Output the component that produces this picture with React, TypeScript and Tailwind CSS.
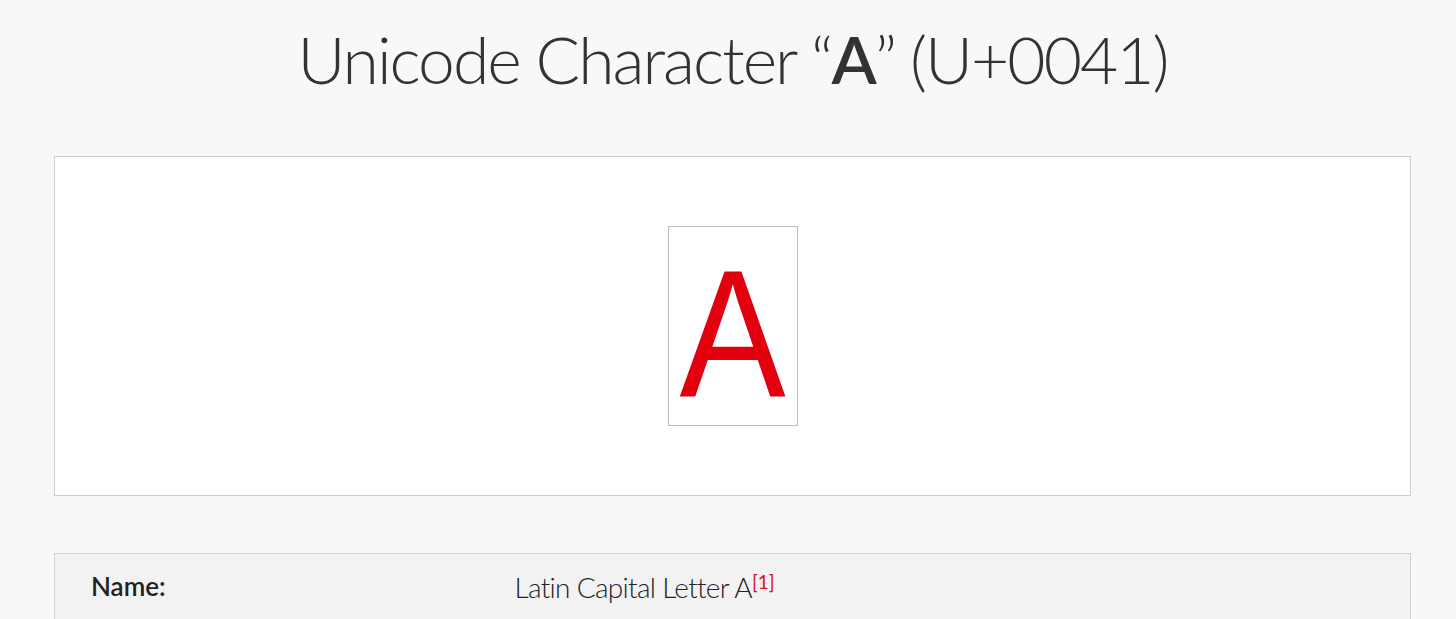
export default function App() {
  return (
    <div className="min-h-screen bg-[#f8f8f8] pl-[54px] pr-[45px] text-[#333]" style={{ fontFamily: "Lato, 'Noto Sans', sans-serif" }}>
      <h1 className="pt-[26px] text-center text-[66px] font-light leading-none tracking-[-2px] text-[#333]">
        Unicode Character “<span className="font-semibold">A</span>” (U+0041)
      </h1>

      <div className="mt-[64px] flex h-[340px] items-center justify-center border border-[#cfcfcf] bg-white">
        <div className="flex h-[200px] w-[130px] flex-col items-center border border-[#bdbdbd] pt-[16px]">
          <span className="scale-x-[0.875] text-[182px] leading-none text-[#e2000f]" style={{ fontFamily: "'Liberation Sans', Arial, sans-serif" }}>A</span>
        </div>
      </div>

      <table className="mt-[57px] w-full border border-[#d2d2d2] bg-[#f2f2f2]">
        <tbody>
          <tr>
            <td className="w-[460px] pb-10 pl-[36px] pt-[19px] align-top text-[26px] font-semibold leading-none text-[#222]">Name:</td>
            <td className="pb-10 pt-[19px] align-top text-[28px] font-light leading-none tracking-[-0.7px] text-[#222]">
              Latin Capital Letter A<sup className="text-[19px] font-normal tracking-normal text-[#e0101e]">[1]</sup>
            </td>
          </tr>
        </tbody>
      </table>
    </div>
  );
}
